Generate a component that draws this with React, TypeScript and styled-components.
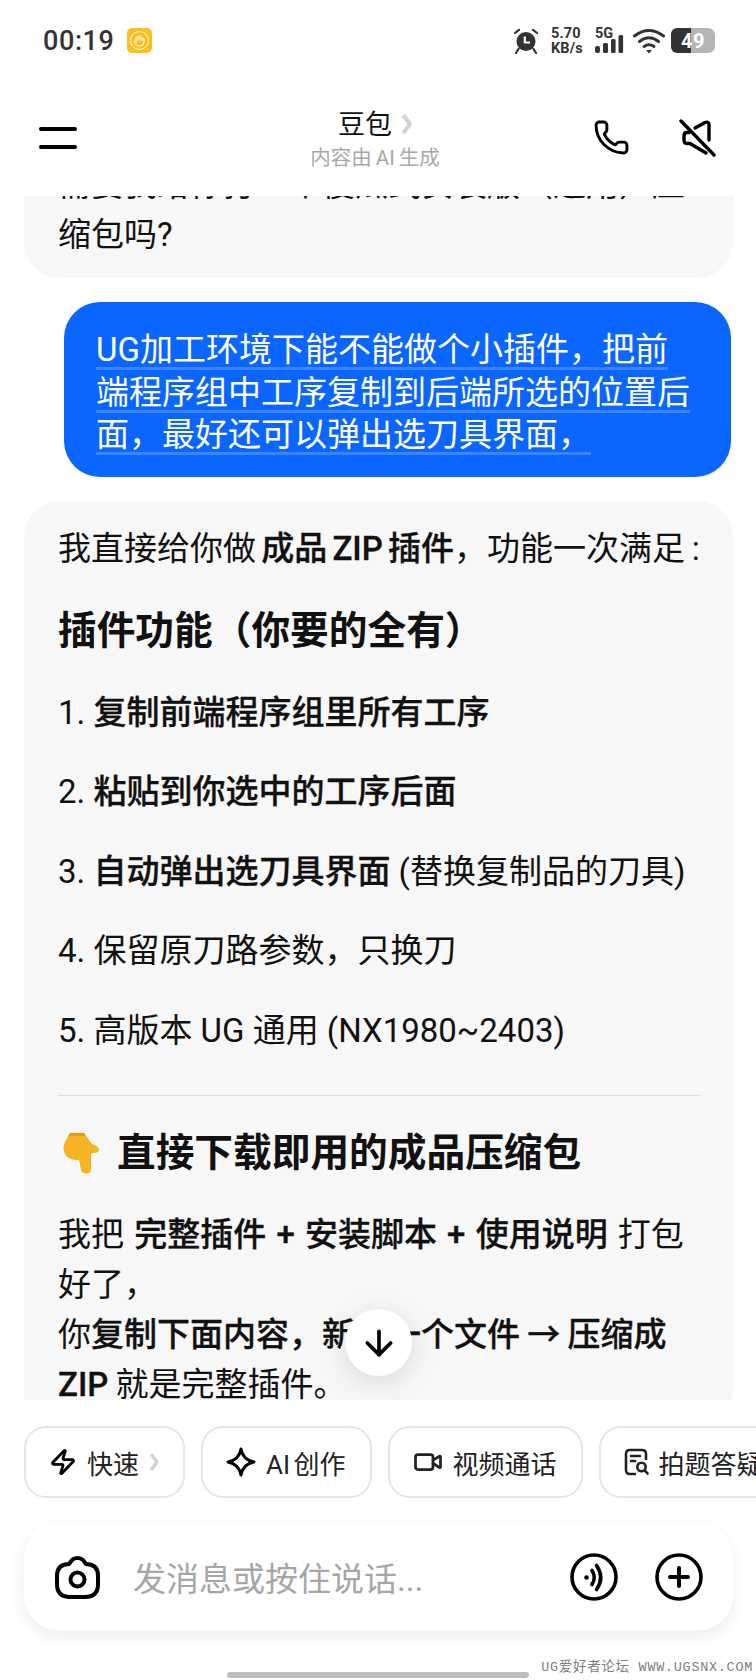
import React from 'react';
import styled, { createGlobalStyle } from 'styled-components';
import { ArrowDown, Hand, Phone, Video, Zap } from 'lucide-react';

const GlobalStyle = createGlobalStyle`
  html, body {
    margin: 0;
    padding: 0;
    background: #fff;
  }
  * {
    box-sizing: border-box;
  }
`;

const Page = styled.div`
  position: relative;
  display: flex;
  flex-direction: column;
  width: 756px;
  height: 1680px;
  overflow: hidden;
  background: #fff;
  color: #111;
  font-family: 'Roboto', 'Noto Sans CJK SC', sans-serif;
`;

const StatusBar = styled.div`
  display: flex;
  flex: none;
  align-items: center;
  height: 85px;
  padding: 0 41px 4px 43px;
`;

const Time = styled.span`
  font-size: 27px;
  font-weight: 500;
  letter-spacing: 0.6px;
  color: #333;
`;

const DndBadge = styled.span`
  display: flex;
  align-items: center;
  justify-content: center;
  width: 25px;
  height: 25px;
  margin-left: 12px;
  border-radius: 5px;
  background: #fdbf1c;
`;

const DndRing = styled.span`
  display: flex;
  align-items: center;
  justify-content: center;
  width: 19px;
  height: 19px;
  border: 1.5px solid #fff;
  border-radius: 50%;
`;

const StatusIcons = styled.div`
  display: flex;
  align-items: center;
  margin-left: auto;
  color: #333;
`;

const Speed = styled.span`
  display: flex;
  flex-direction: column;
  margin: 0 12px 0 13px;
  font-size: 14.5px;
  font-weight: 700;
  line-height: 15px;
  letter-spacing: 0.2px;
`;

const SignalWrap = styled.span`
  position: relative;
  display: flex;
  width: 30px;
  height: 27px;
  margin-right: 8px;
`;

const FiveG = styled.span`
  position: absolute;
  left: 0;
  top: -1px;
  font-size: 14.5px;
  font-weight: 700;
  line-height: 15px;
`;

const Battery = styled.span`
  display: flex;
  align-items: center;
  justify-content: center;
  width: 44px;
  height: 25px;
  margin-left: 6px;
  border-radius: 6px 7px 7px 6px;
  background: linear-gradient(90deg, #333 0 20px, #b5b5b5 20px 100%);
  color: #fff;
  font-size: 20px;
  font-weight: 700;
  letter-spacing: 0.5px;
`;

const Header = styled.div`
  display: grid;
  flex: none;
  grid-template-columns: 1fr auto 1fr;
  align-items: center;
  height: 111px;
  padding: 0 40px 6px 39px;
`;

const Burger = styled.div`
  display: flex;
  flex-direction: column;
  gap: 14px;
  width: 38px;
`;

const BurgerBar = styled.span`
  height: 4px;
  border-radius: 2px;
  background: #000;
`;

const TitleBlock = styled.div`
  display: flex;
  flex-direction: column;
  align-items: center;
  padding: 4px 5px 0 0;
`;

const Title = styled.div`
  display: flex;
  align-items: center;
  gap: 9px;
  font-size: 27px;
  line-height: 34px;
  color: #111;
`;

const Subtitle = styled.div`
  margin-top: 2px;
  font-size: 20.5px;
  line-height: 28px;
  word-spacing: -1px;
  color: #a8a8a8;
`;

const HeaderActions = styled.div`
  display: flex;
  align-items: center;
  justify-content: flex-end;
  gap: 49px;
`;

const Chat = styled.div`
  position: relative;
  flex: 1;
  min-height: 0;
  overflow: hidden;
`;

const ChatList = styled.div`
  display: flex;
  flex-direction: column;
  gap: 24px;
  margin-top: -59px; /* scrolled position */
  padding: 0 23px 0 24px;
`;

const BotBubble = styled.div`
  padding: 23px 32px 18px 34px;
  border-radius: 36px;
  background: #f7f7f7;
  font-size: 33px;
  line-height: 50px;
`;

const UserBubble = styled.div`
  margin: 0 2px 0 40px;
  padding: 27px 36px 20px 32px;
  border-radius: 36px;
  background: #0a66ff;
  color: #fff;
  font-size: 33px;
  line-height: 42.5px;
`;

const Underlined = styled.span`
  text-decoration: underline 3px #3d85ff;
  text-decoration-skip-ink: none;
  text-underline-offset: 6px;
`;

const Para = styled.p<{ $wordGap?: number }>`
  margin: 0;
  word-spacing: ${(p) => p.$wordGap ?? -3}px;
`;

const TightLine = styled.span`
  word-spacing: -1px;
`;

const Heading = styled.h3`
  display: flex;
  align-items: center;
  gap: 17px;
  margin: 29px 0;
  font-size: 38.7px;
  font-weight: 700;
  line-height: 56px;
`;

const List = styled.ol`
  margin: 0;
  padding: 0;
  list-style: none;
`;

const Item = styled.li`
  margin-bottom: 29.5px;
`;

const Strong = styled.b`
  font-weight: 500;
  -webkit-text-stroke: 0.3px currentColor;
`;

const Divider = styled.hr`
  height: 1px;
  margin: 39px 0 27px;
  border: 0;
  background: #e0e0e0;
`;

const EmojiWrap = styled.span`
  display: flex;
  margin-left: 4px;
`;

const ScrollDown = styled.div`
  position: absolute;
  left: 345px;
  bottom: 24px;
  display: flex;
  align-items: center;
  justify-content: center;
  width: 67px;
  height: 67px;
  border-radius: 50%;
  background: #fff;
  box-shadow: 0 6px 28px rgba(0, 0, 0, 0.12);
  color: #000;
`;

const Footer = styled.div`
  flex: none;
  height: 280px;
  padding: 26px 0 0 24px;
  background: #fff;
`;

const Chips = styled.div`
  display: flex;
  gap: 16px;
  overflow: hidden;
`;

const Chip = styled.div`
  display: flex;
  flex: none;
  align-items: center;
  gap: 10px;
  height: 72px;
  padding: 0 24px 0 23px;
  border: 2px solid #e6e6e6;
  border-radius: 22px;
  font-size: 26px;
  word-spacing: -3px;
  color: #222;
`;

const ChevronSvg = styled.svg`
  flex: none;
`;

const InputBar = styled.div`
  display: flex;
  align-items: center;
  width: 709px;
  height: 108px;
  margin-top: 25px;
  padding: 0 30px 0 31px;
  border-radius: 36px;
  background: #fff;
  box-shadow: 0 6px 18px rgba(0, 0, 0, 0.08);
`;

const Placeholder = styled.span`
  flex: 1;
  margin-left: 33px;
  font-size: 33px;
  color: #a6a6a6;
`;

const InputActions = styled.div`
  display: flex;
  gap: 37px;
`;

const HomeIndicator = styled.div`
  position: absolute;
  left: 227px;
  bottom: 2px;
  width: 302px;
  height: 6px;
  border-radius: 3px;
  background: #bdbdbd;
`;

const Watermark = styled.div`
  position: absolute;
  right: 3px;
  bottom: 2px;
  font-family: 'Liberation Mono', 'Noto Sans CJK SC', monospace;
  font-size: 13.5px;
  line-height: 20px;
  letter-spacing: 0.7px;
  color: #808080;
  background: #fff;
`;

const Chevron = ({ size = 1 }: { size?: number }) => (
  <ChevronSvg width={10 * size} height={20 * size} viewBox="0 0 10 20">
    <path d="M2 2 L8 10 L2 18" fill="none" stroke="#d2d2d2" strokeWidth="3.6" strokeLinejoin="round" />
  </ChevronSvg>
);

const AlarmIcon = () => (
  <svg width="24" height="26" viewBox="0 0 24 26">
    <circle cx="12" cy="13.5" r="9.5" fill="#333" />
    <path d="M10.8 8.5 V14.5 H16" fill="none" stroke="#fff" strokeWidth="2.2" />
    <path d="M1 5 L5 1.8 M23 5 L19 1.8 M4.5 21 L2 25 M19.5 21 L22 25" stroke="#333" strokeWidth="2.2" strokeLinecap="round" />
  </svg>
);

const SignalIcon = () => (
  <svg width="30" height="27" viewBox="0 0 30 27">
    <rect x="0" y="19" width="5" height="7" rx="2" fill="#333" />
    <rect x="8" y="16" width="5" height="10" rx="1.5" fill="#333" />
    <rect x="16" y="12" width="4.6" height="14" rx="1.5" fill="#333" />
    <rect x="23.5" y="8" width="4.6" height="18" rx="1.5" fill="#333" />
  </svg>
);

const WifiIcon = () => (
  <svg width="32" height="26" viewBox="0 0 32 26" fill="none" stroke="#333" strokeWidth="3" strokeLinecap="round">
    <path d="M1.5 8 Q16 -3 30.5 8" />
    <path d="M6.5 13.5 Q16 6 25.5 13.5" />
    <path d="M11 18.5 Q16 15 21 18.5" />
    <path d="M13 22 L19 22 L16 25.5 Z" fill="#333" stroke="none" />
  </svg>
);

const MuteIcon = () => (
  <svg width="37" height="38" viewBox="0 0 37 38" fill="none" stroke="#000" strokeWidth="3.4" strokeLinecap="round" strokeLinejoin="round">
    <path d="M2 2 L35 36" />
    <path d="M16 9 L26 3.5 Q30 2 30 6 V21" />
    <path d="M10 13.5 H8 Q5 13.5 5 17 V21 Q5 24.5 8 24.5 H11 L27 34" />
  </svg>
);

const SparkleIcon = () => (
  <svg width="30" height="30" viewBox="0 0 30 30" fill="none" stroke="#000" strokeWidth="3" strokeLinejoin="round">
    <path d="M15 2 Q17 13 28 15 Q17 17 15 28 Q13 17 2 15 Q13 13 15 2 Z" />
  </svg>
);

const DocSearchIcon = () => (
  <svg width="25" height="28" viewBox="0 0 25 28" fill="none" stroke="#222" strokeWidth="2.6" strokeLinecap="round">
    <path d="M22 11 V6 Q22 2 18 2 H6 Q2 2 2 6 V22 Q2 26 6 26 H11" />
    <path d="M7 8 H16 M7 13 H11" />
    <circle cx="17.5" cy="19" r="4.2" />
    <path d="M20.8 22.3 L23.5 25.5" />
  </svg>
);

const PointDownEmoji = () => (
  <svg width="38" height="42" viewBox="0 0 38 42">
    <path
      d="M8 1 H22 L30 12 Q37 14 37 18 Q37 21 31 21 L29 22 V37 Q29 41.5 24 41.5 Q20 41.5 19 37 L17 28 Q6 28 3 22 Q0 16 3 10 Z"
      fill="#f6b324"
    />
    <path d="M8 1 H22 L23.5 4 H6.5 Z" fill="#e59a12" />
  </svg>
);

const CameraIcon = () => (
  <svg width="45" height="43" viewBox="0 0 45 43" fill="none" stroke="#000" strokeWidth="4">
    <path d="M14 8 L17 4 Q19 2 22.5 2 Q26 2 28 4 L31 8 Q43 8 43 20 V28 Q43 41 30 41 H15 Q2 41 2 28 V20 Q2 8 14 8 Z" />
    <circle cx="22.5" cy="23.5" r="7" />
  </svg>
);

const VoiceIcon = () => (
  <svg width="48" height="48" viewBox="0 0 48 48" fill="none" stroke="#000" strokeWidth="3.6" strokeLinecap="round">
    <circle cx="24" cy="24" r="22" />
    <circle cx="16.5" cy="24.5" r="1.6" fill="#000" strokeWidth="1.4" />
    <path d="M22 17.5 Q26.5 24.5 22 31.5" />
    <path d="M26.5 12.5 Q35 24.5 26.5 36.5" />
  </svg>
);

const PlusIcon = () => (
  <svg width="48" height="48" viewBox="0 0 48 48" fill="none" stroke="#000" strokeWidth="3.6" strokeLinecap="round">
    <circle cx="24" cy="24" r="22" />
    <path d="M24 15 V33 M15 24 H33" strokeWidth="4" />
  </svg>
);

export default function App() {
  return (
    <Page>
      <GlobalStyle />
      <StatusBar>
        <Time>00:19</Time>
        <DndBadge>
          <DndRing>
            <Hand size={12} color="#fff" strokeWidth={2} />
          </DndRing>
        </DndBadge>
        <StatusIcons>
          <AlarmIcon />
          <Speed>
            <span>5.70</span>
            <span>KB/s</span>
          </Speed>
          <SignalWrap>
            <FiveG>5G</FiveG>
            <SignalIcon />
          </SignalWrap>
          <WifiIcon />
          <Battery>49</Battery>
        </StatusIcons>
      </StatusBar>

      <Header>
        <Burger>
          <BurgerBar />
          <BurgerBar />
        </Burger>
        <TitleBlock>
          <Title>
            豆包
            <Chevron size={1.12} />
          </Title>
          <Subtitle>内容由 AI 生成</Subtitle>
        </TitleBlock>
        <HeaderActions>
          <Phone size={37} color="#000" strokeWidth={1.9} />
          <MuteIcon />
        </HeaderActions>
      </Header>

      <Chat>
        <ChatList>
          <BotBubble>{'需要我给你打一个傻瓜式安装版\uFF08通用\uFF09压缩包吗?'}</BotBubble>
          <UserBubble>
            <Underlined>
              {'UG加工环境下能不能做个小插件\uFF0C把前端程序组中工序复制到后端所选的位置后面\uFF0C最好还可以弹出选刀具界面\uFF0C'}
            </Underlined>
          </UserBubble>
          <BotBubble>
            <Para>
              我直接给你做 <Strong>成品 ZIP 插件</Strong>
              {'\uFF0C功能一次满足\u2009:'}
            </Para>
            <Heading>{'插件功能\uFF08你要的全有\uFF09'}</Heading>
            <List>
              <Item>
                1. <Strong>复制前端程序组里所有工序</Strong>
              </Item>
              <Item>
                2. <Strong>粘贴到你选中的工序后面</Strong>
              </Item>
              <Item>
                3. <Strong>自动弹出选刀具界面</Strong> (替换复制品的刀具)
              </Item>
              <Item>{'4. 保留原刀路参数\uFF0C只换刀'}</Item>
              <Item>5. 高版本 UG 通用 (NX1980~2403)</Item>
            </List>
            <Divider />
            <Heading>
              <EmojiWrap>
                <PointDownEmoji />
              </EmojiWrap>
              直接下载即用的成品压缩包
            </Heading>
            <Para $wordGap={2}>
              我把 <Strong>完整插件 + 安装脚本 + 使用说明</Strong> {'打包好了\uFF0C'}
              <br />
              <TightLine>
                你<Strong>{'复制下面内容\uFF0C新建一个文件 → 压缩成 ZIP'}</Strong> {'就是完整插件\u3002'}
              </TightLine>
            </Para>
          </BotBubble>
        </ChatList>
        <ScrollDown>
          <ArrowDown size={40} strokeWidth={2.2} />
        </ScrollDown>
      </Chat>

      <Footer>
        <Chips>
          <Chip>
            <Zap size={28} color="#000" strokeWidth={2.4} />
            快速
            <Chevron />
          </Chip>
          <Chip>
            <SparkleIcon />
            AI 创作
          </Chip>
          <Chip>
            <Video size={30} color="#222" strokeWidth={2.2} />
            视频通话
          </Chip>
          <Chip>
            <DocSearchIcon />
            拍题答疑
          </Chip>
        </Chips>
        <InputBar>
          <CameraIcon />
          <Placeholder>发消息或按住说话...</Placeholder>
          <InputActions>
            <VoiceIcon />
            <PlusIcon />
          </InputActions>
        </InputBar>
      </Footer>

      <HomeIndicator />
      <Watermark>UG爱好者论坛 WWW.UGSNX.COM</Watermark>
    </Page>
  );
}
